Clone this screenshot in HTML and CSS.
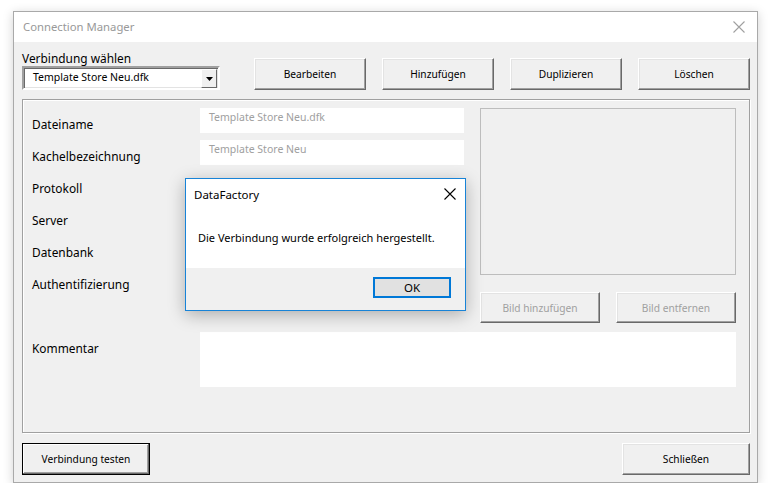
FILE: index.html
```html
<!DOCTYPE html>
<html lang="de">
<head>
<meta charset="utf-8">
<title>Connection Manager</title>
<link rel="stylesheet" href="styles.css">
</head>
<body>
<div class="window">
  <div class="titlebar">
    <span class="title">Connection Manager</span>
    <span class="close">
      <svg width="12" height="12" viewBox="0 0 12 12"><path d="M0.5 0.5 L11.5 11.5 M11.5 0.5 L0.5 11.5" stroke="#a0a0a0" stroke-width="1.1" fill="none"/></svg>
    </span>
  </div>
  <div class="content">
    <div class="toprow">
      <div class="select-col">
        <div class="select-label">Verbindung wählen</div>
        <div class="combo">
          <span class="combo-text">Template Store Neu.dfk</span>
          <span class="combo-btn"><svg width="7" height="4" viewBox="0 0 7 4"><path d="M0 0 H7 L3.5 4 Z" fill="#000"/></svg></span>
        </div>
      </div>
      <div class="topbtns">
        <button class="btn wide">Bearbeiten</button>
        <button class="btn wide">Hinzufügen</button>
        <button class="btn wide">Duplizieren</button>
        <button class="btn wide">Löschen</button>
      </div>
    </div>

    <div class="group">
      <div class="upper">
        <div class="form">
          <div class="row"><span class="lbl">Dateiname</span><div class="field">Template Store Neu.dfk</div></div>
          <div class="row"><span class="lbl">Kachelbezeichnung</span><div class="field">Template Store Neu</div></div>
          <div class="row"><span class="lbl">Protokoll</span></div>
          <div class="row"><span class="lbl">Server</span></div>
          <div class="row"><span class="lbl">Datenbank</span></div>
          <div class="row"><span class="lbl">Authentifizierung</span></div>
        </div>
        <div class="piccol">
          <div class="picbox"></div>
          <div class="picbtns">
            <button class="btn disabled">Bild hinzufügen</button>
            <button class="btn disabled">Bild entfernen</button>
          </div>
        </div>
      </div>
      <div class="commentrow">
        <span class="lbl">Kommentar</span>
        <div class="comment"></div>
      </div>
    </div>

    <div class="bottomrow">
      <button class="btn default">Verbindung testen</button>
      <button class="btn">Schließen</button>
    </div>
  </div>

  <div class="dialog">
    <div class="dlg-body">
      <div class="dlg-title">
        <span>DataFactory</span>
        <svg width="12" height="12" viewBox="0 0 12 12"><path d="M0.5 0.5 L11.5 11.5 M11.5 0.5 L0.5 11.5" stroke="#000" stroke-width="1.1" fill="none"/></svg>
      </div>
      <div class="dlg-msg">Die Verbindung wurde erfolgreich hergestellt.</div>
    </div>
    <div class="dlg-foot">
      <button class="okbtn">OK</button>
    </div>
  </div>
</div>
</body>
</html>
```

FILE: styles.css
```css
* { box-sizing: border-box; }
html, body { margin: 0; padding: 0; background: #fff; }
body {
  font-family: "Noto Sans", "DejaVu Sans", sans-serif;
  font-size: 12px;
  color: #000;
}
.window {
  position: relative;
  margin: 11px 0 0 13px;
  width: 745px;
  height: 472px;
  background: #f0f0f0;
  border: 1px solid #a9a9a9;
  box-shadow: 0 2px 10px rgba(0,0,0,0.18);
}
.titlebar {
  height: 30px;
  background: #fff;
  display: flex;
  align-items: center;
  justify-content: space-between;
  padding: 0 10px 0 9px;
}
.title { color: #999; font-size: 11.3px; margin-top: -2px; }
.close { display: flex; align-items: center; margin-right: 2px; }

.content { padding: 8px 6px 0 8px; }
.toprow { display: flex; align-items: flex-end; }
.select-col { width: 198px; }
.select-label { font-size: 11.9px; line-height: 16px; }
.combo {
  height: 24px;
  background: #fff;
  border: 2px solid;
  border-color: #a0a0a0 #fff #fff #a0a0a0;
  box-shadow: inset 1px 1px 0 #696969, inset -1px -1px 0 #e3e3e3;
  display: flex;
  align-items: center;
  justify-content: space-between;
  padding: 0 1px 0 9px;
}
.combo-text { font-size: 10.5px; margin-top: -2px; }
.combo-btn {
  width: 16px; height: 19px;
  background: #f0f0f0;
  border: 1px solid;
  border-color: #fff #696969 #696969 #fff;
  display: flex; align-items: center; justify-content: center;
  margin-top: 1px;
}
.topbtns { display: flex; gap: 16px; margin-left: 34px; }

.btn {
  font-family: "Noto Sans", "DejaVu Sans", sans-serif;
  font-size: 10.2px;
  color: #000;
  background: #f0f0f0;
  height: 32px;
  border: 1px solid;
  border-color: #fff #696969 #696969 #fff;
  box-shadow: inset -1px -1px 0 #a0a0a0, inset 1px 1px 0 #e3e3e3;
  padding: 0;
  width: 128px;
}
.btn.wide { width: 112px; }
.btn.disabled { color: #a0a0a0; width: 120px; height: 31px; }
.btn.default {
  border: 1px solid #000;
  box-shadow: inset -1px -1px 0 #696969, inset 1px 1px 0 #fff, inset -2px -2px 0 #a0a0a0;
}

.group {
  margin-top: 9px;
  width: 728px;
  height: 334px;
  border: 1px solid #a0a0a0;
  box-shadow: inset 1px 1px 0 #fff, 1px 1px 0 #fff;
  padding: 8px 13px 0 9px;
}
.upper { display: flex; }
.form { width: 448px; flex: none; }
.row { height: 32px; display: flex; }
.lbl { width: 168px; flex: none; font-size: 11.9px; padding-top: 8px; line-height: 16px; }
.field {
  width: 264px; height: 25px; background: #fff;
  color: #a0a0a0; font-size: 10.5px;
  padding: 2px 0 0 9px;
}
.piccol { width: 256px; flex: none; }
.picbox { height: 167px; border: 1px solid #bdbdbd; }
.picbtns { display: flex; justify-content: space-between; margin-top: 17px; }

.commentrow { display: flex; margin-top: 9px; }
.commentrow .lbl { padding-top: 8px; }
.comment { width: 536px; height: 55px; background: #fff; }

.bottomrow {
  display: flex; justify-content: space-between;
  margin-top: 10px; width: 728px;
}

.dialog {
  position: absolute;
  left: 171px; top: 166px;
  width: 281px; height: 133px;
  border: 1px solid #1883d7;
  background: #f0f0f0;
  box-shadow: 0 4px 16px rgba(0,0,0,0.28);
  display: flex; flex-direction: column;
}
.dlg-body { background: #fff; height: 89px; }
.dlg-title {
  display: flex; justify-content: space-between; align-items: center;
  padding: 6px 9px 0 8px; font-size: 11.5px; height: 24px;
}
.dlg-msg { padding: 27px 0 0 12px; font-size: 11px; }
.dlg-foot { flex: 1; display: flex; justify-content: flex-end; align-items: flex-start; padding: 9px 14px 0 0; }
.okbtn {
  width: 78px; height: 21px;
  background: #e1e1e1;
  border: 2px solid #0078d7;
  font-family: "Noto Sans", "DejaVu Sans", sans-serif;
  font-size: 11.5px; padding: 0; color: #000;
}
```
